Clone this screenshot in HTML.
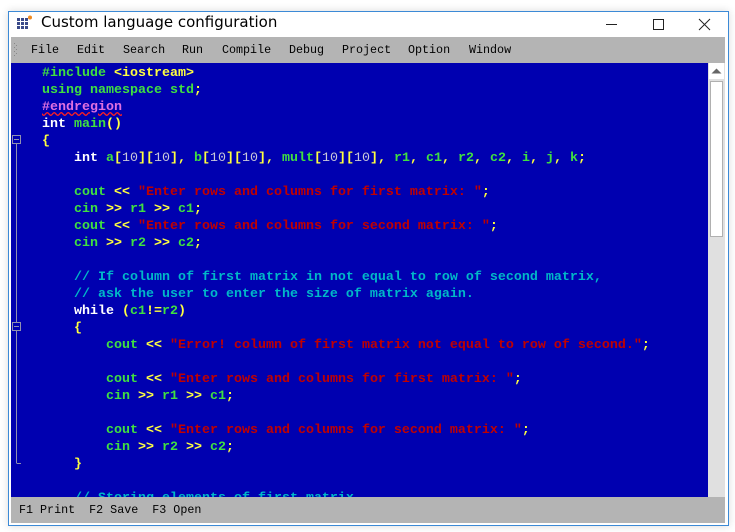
<!DOCTYPE html>
<html><head><style>
*{margin:0;padding:0;box-sizing:border-box}
body{width:735px;height:532px;background:#fff;position:relative;overflow:hidden;font-family:"Liberation Mono",monospace}
.win{position:absolute;left:8px;top:11px;width:721px;height:515px;border:1px solid #3c8ad6;background:#fff;box-shadow:0 0 8px rgba(0,0,0,.15)}
.title{position:absolute;left:41px;top:13px;font-family:"DejaVu Sans","Liberation Sans",sans-serif;font-size:15px;color:#000}
.menu{position:absolute;left:11px;top:37px;width:714px;height:26px;background:#b4b4b4}
.menu span{position:absolute;top:6px;font-size:11.7px;color:#000}
.ed{position:absolute;left:11px;top:63px;width:697px;height:434px;background:#0000b0;overflow:hidden}
.sb{position:absolute;left:708px;top:63px;width:17px;height:434px;background:#e0e0e0}
.status{position:absolute;left:11px;top:497px;width:714px;height:26px;background:#b4b4b4}
.status span{position:absolute;top:6px;font-size:11.7px;color:#000;white-space:pre}
.l{position:absolute;left:31px;white-space:pre;font-size:13.33px;font-weight:bold;line-height:17px;color:#40e040;margin-top:1px}
.k{color:#fff}.o{color:#ffff40}.s{color:#c00000}.c{color:#00b8c8}.n{color:#c8c8d8;font-weight:normal}.p{color:#e070e0}
</style></head><body>
<div class="win"></div>
<svg style="position:absolute;left:17px;top:15px" width="16" height="16"><g fill="#3a4a8a"><rect x="0" y="3" width="3" height="3"/><rect x="4" y="3" width="3" height="3"/><rect x="8" y="3" width="3" height="3"/><rect x="0" y="7" width="3" height="3"/><rect x="4" y="7" width="3" height="3"/><rect x="8" y="7" width="3" height="3"/><rect x="0" y="11" width="3" height="3"/><rect x="4" y="11" width="3" height="3"/><rect x="8" y="11" width="3" height="3"/></g><circle cx="13" cy="2.5" r="2" fill="#f08a20"/></svg>
<div class="title">Custom language configuration</div>
<svg style="position:absolute;left:600px;top:14px" width="125" height="20"><line x1="6" y1="10.5" x2="17" y2="10.5" stroke="#222"/><rect x="53.5" y="5.5" width="10" height="10" fill="none" stroke="#222"/><path d="M99 5L110 16M110 5L99 16" stroke="#222"/></svg>
<div class="menu"><svg style="position:absolute;left:3px;top:5px" width="4" height="16"><g fill="#888"><rect x="0" y="1" width="1" height="1"/><rect x="2" y="3" width="1" height="1"/><rect x="0" y="5" width="1" height="1"/><rect x="2" y="7" width="1" height="1"/><rect x="0" y="9" width="1" height="1"/><rect x="2" y="11" width="1" height="1"/><rect x="0" y="13" width="1" height="1"/></g></svg>
<span style="left:20px">File</span><span style="left:66px">Edit</span><span style="left:112px">Search</span><span style="left:171px">Run</span><span style="left:211px">Compile</span><span style="left:278px">Debug</span><span style="left:331px">Project</span><span style="left:397px">Option</span><span style="left:458px">Window</span></div>
<div class="ed">
<svg style="position:absolute;left:0;top:0" width="20" height="434"><g stroke="#9090b0" fill="none"><rect x="1.5" y="72.5" width="8" height="8"/><line x1="3" y1="76.5" x2="8" y2="76.5"/><line x1="5.5" y1="81" x2="5.5" y2="259"/><line x1="5.5" y1="268" x2="5.5" y2="400"/><line x1="5.5" y1="400.5" x2="10" y2="400.5"/><rect x="1.5" y="259.5" width="8" height="8"/><line x1="3" y1="263.5" x2="8" y2="263.5"/></g></svg>
<div class="l" style="top:1px">#include <span class="o">&lt;iostream&gt;</span></div>
<div class="l" style="top:18px">using namespace std<span class="o">;</span></div>
<div class="l p" style="top:35px;text-decoration:underline wavy #ff2020">#endregion</div>
<div class="l" style="top:52px"><span class="k">int</span> main<span class="o">()</span></div>
<div class="l" style="top:69px"><span class="o">{</span></div>
<div class="l" style="top:86px">    <span class="k">int</span> a<span class="o">[</span><span class="n">10</span><span class="o">][</span><span class="n">10</span><span class="o">],</span> b<span class="o">[</span><span class="n">10</span><span class="o">][</span><span class="n">10</span><span class="o">],</span> mult<span class="o">[</span><span class="n">10</span><span class="o">][</span><span class="n">10</span><span class="o">],</span> r1<span class="o">,</span> c1<span class="o">,</span> r2<span class="o">,</span> c2<span class="o">,</span> i<span class="o">,</span> j<span class="o">,</span> k<span class="o">;</span></div>
<div class="l" style="top:120px">    cout <span class="o">&lt;&lt;</span> <span class="s">"Enter rows and columns for first matrix: "</span><span class="o">;</span></div>
<div class="l" style="top:137px">    cin <span class="o">&gt;&gt;</span> r1 <span class="o">&gt;&gt;</span> c1<span class="o">;</span></div>
<div class="l" style="top:154px">    cout <span class="o">&lt;&lt;</span> <span class="s">"Enter rows and columns for second matrix: "</span><span class="o">;</span></div>
<div class="l" style="top:171px">    cin <span class="o">&gt;&gt;</span> r2 <span class="o">&gt;&gt;</span> c2<span class="o">;</span></div>
<div class="l c" style="top:205px">    // If column of first matrix in not equal to row of second matrix,</div>
<div class="l c" style="top:222px">    // ask the user to enter the size of matrix again.</div>
<div class="l" style="top:239px">    <span class="k">while</span> <span class="o">(</span>c1<span class="o">!=</span>r2<span class="o">)</span></div>
<div class="l" style="top:256px">    <span class="o">{</span></div>
<div class="l" style="top:273px">        cout <span class="o">&lt;&lt;</span> <span class="s">"Error! column of first matrix not equal to row of second."</span><span class="o">;</span></div>
<div class="l" style="top:307px">        cout <span class="o">&lt;&lt;</span> <span class="s">"Enter rows and columns for first matrix: "</span><span class="o">;</span></div>
<div class="l" style="top:324px">        cin <span class="o">&gt;&gt;</span> r1 <span class="o">&gt;&gt;</span> c1<span class="o">;</span></div>
<div class="l" style="top:358px">        cout <span class="o">&lt;&lt;</span> <span class="s">"Enter rows and columns for second matrix: "</span><span class="o">;</span></div>
<div class="l" style="top:375px">        cin <span class="o">&gt;&gt;</span> r2 <span class="o">&gt;&gt;</span> c2<span class="o">;</span></div>
<div class="l" style="top:392px">    <span class="o">}</span></div>
<div class="l c" style="top:426px">    // Storing elements of first matrix.</div>
</div>
<div class="sb"><div style="position:absolute;left:1px;top:0;width:15px;height:16px;background:#fff"></div><svg style="position:absolute;left:3px;top:5px" width="11" height="6"><path d="M0.5 5.5L5.5 0.5L10.5 5.5Z" fill="#666"/></svg><div style="position:absolute;left:2px;top:18px;width:13px;height:156px;background:#fff;border:1px solid #b0b0b0"></div></div>
<div class="status"><span style="left:8px">F1 Print  F2 Save  F3 Open</span></div>
</body></html>
